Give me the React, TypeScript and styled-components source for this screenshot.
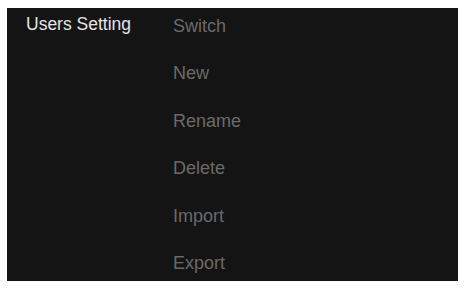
import React from "react";
import styled, { createGlobalStyle } from "styled-components";

const Global = createGlobalStyle`
  html, body { margin: 0; padding: 0; background: #ffffff; }
  body { font-family: "Liberation Sans", Arial, sans-serif; }
`;

const Panel = styled.div`
  box-sizing: border-box;
  margin: 8px 0 0 7px;
  width: 451px;
  height: 273px;
  background: #141414;
  display: flex;
  align-items: flex-start;
  padding: 6px 0 0 19px;
`;

const Title = styled.div`
  width: 147px;
  font-size: 17.5px;
  line-height: 20px;
  color: #e4e4e4;
  white-space: nowrap;
`;

const Menu = styled.ul`
  list-style: none;
  margin: 0;
  padding: 2px 0 0 0;
  display: flex;
  flex-direction: column;
  gap: 27.4px;
`;

const Item = styled.li`
  font-size: 18px;
  line-height: 20px;
  color: #6a6a6a;
  white-space: nowrap;
`;

const items = ["Switch", "New", "Rename", "Delete", "Import", "Export"];

export default function App() {
  return (
    <>
      <Global />
      <Panel>
        <Title>Users Setting</Title>
        <Menu>
          {items.map((t) => (
            <Item key={t}>{t}</Item>
          ))}
        </Menu>
      </Panel>
    </>
  );
}
